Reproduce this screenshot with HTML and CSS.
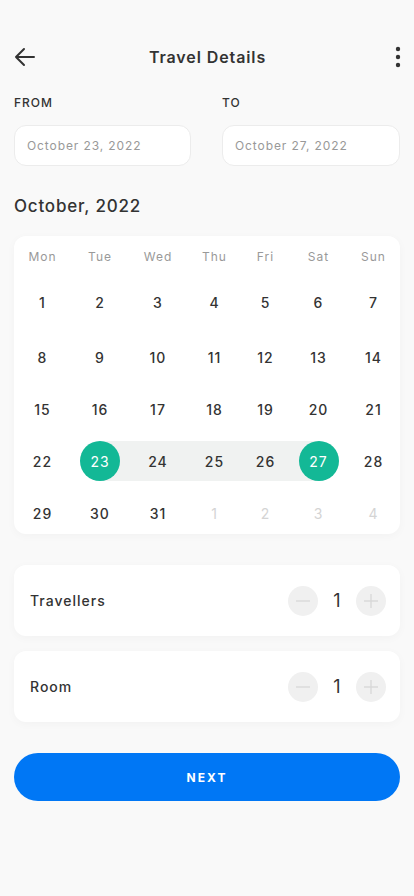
FILE: index.html
```html
<!DOCTYPE html>
<html lang="en">
<head>
    <meta charset="UTF-8">
    <meta name="viewport" content="width=device-width, initial-scale=1.0">
    <title>Travel Details</title>
    <link rel="stylesheet" href="styles.css">
</head>
<body>
    <div class="page">
        <header class="topbar">
            <button class="icon-btn" aria-label="Back">
                <svg width="22" height="22" viewBox="0 0 22 22" fill="none" stroke="#333" stroke-width="2" stroke-linecap="round" stroke-linejoin="round">
                    <path d="M20 11H2M10 3l-8 8 8 8"/>
                </svg>
            </button>
            <h1 class="title">Travel Details</h1>
            <button class="icon-btn more" aria-label="More">
                <svg width="6" height="22" viewBox="0 0 6 22" fill="#333">
                    <circle cx="3" cy="3" r="2.2"/>
                    <circle cx="3" cy="11" r="2.2"/>
                    <circle cx="3" cy="19" r="2.2"/>
                </svg>
            </button>
        </header>

        <div class="dates">
            <div class="date-field">
                <label>FROM</label>
                <div class="date-input">October 23, 2022</div>
            </div>
            <div class="date-field">
                <label>TO</label>
                <div class="date-input">October 27, 2022</div>
            </div>
        </div>

        <h2 class="month">October, 2022</h2>

        <div class="calendar">
            <div class="week weekdays">
                <span>Mon</span><span>Tue</span><span>Wed</span><span>Thu</span><span>Fri</span><span>Sat</span><span>Sun</span>
            </div>
            <div class="week">
                <span>1</span><span>2</span><span>3</span><span>4</span><span>5</span><span>6</span><span>7</span>
            </div>
            <div class="week">
                <span>8</span><span>9</span><span>10</span><span>11</span><span>12</span><span>13</span><span>14</span>
            </div>
            <div class="week">
                <span>15</span><span>16</span><span>17</span><span>18</span><span>19</span><span>20</span><span>21</span>
            </div>
            <div class="week in-range">
                <span>22</span><span class="picked">23</span><span>24</span><span>25</span><span>26</span><span class="picked">27</span><span>28</span>
            </div>
            <div class="week">
                <span>29</span><span>30</span><span>31</span><span class="muted">1</span><span class="muted">2</span><span class="muted">3</span><span class="muted">4</span>
            </div>
        </div>

        <div class="counter">
            <span class="counter-label">Travellers</span>
            <div class="stepper">
                <button class="step" aria-label="Less">
                    <svg width="14" height="14" viewBox="0 0 14 14" stroke="#d9d9d9" stroke-width="1.4"><path d="M0 7h14"/></svg>
                </button>
                <span class="count">1</span>
                <button class="step" aria-label="More">
                    <svg width="14" height="14" viewBox="0 0 14 14" stroke="#d9d9d9" stroke-width="1.4"><path d="M0 7h14M7 0v14"/></svg>
                </button>
            </div>
        </div>

        <div class="counter">
            <span class="counter-label">Room</span>
            <div class="stepper">
                <button class="step" aria-label="Less">
                    <svg width="14" height="14" viewBox="0 0 14 14" stroke="#d9d9d9" stroke-width="1.4"><path d="M0 7h14"/></svg>
                </button>
                <span class="count">1</span>
                <button class="step" aria-label="More">
                    <svg width="14" height="14" viewBox="0 0 14 14" stroke="#d9d9d9" stroke-width="1.4"><path d="M0 7h14M7 0v14"/></svg>
                </button>
            </div>
        </div>

        <button class="next">NEXT</button>
    </div>
</body>
</html>
```

FILE: styles.css
```css
body {
    margin: 0;
    background-color: #f9f9f9;
    font-family: Inter, "Noto Sans", sans-serif;
    color: #333;
}
button {
    font-family: inherit;
    border: none;
    background: none;
    padding: 0;
    cursor: pointer;
}
.page {
    padding: 0 14px;
}
.topbar {
    margin-top: 37px;
    height: 40px;
    display: flex;
    align-items: center;
    justify-content: space-between;
}
.icon-btn {
    width: 24px;
    height: 24px;
    display: flex;
    align-items: center;
}
.icon-btn.more {
    justify-content: flex-end;
    margin-right: -1px;
}
.title {
    margin: 0;
    font-size: 16px;
    font-weight: 600;
    letter-spacing: 0.9px;
    color: #333;
}
.dates {
    margin-top: 18px;
    display: grid;
    grid-template-columns: 177px 178px;
    justify-content: space-between;
}
.date-field label {
    display: block;
    font-size: 12px;
    font-weight: 500;
    letter-spacing: 1px;
    line-height: 16px;
    color: #333;
}
.date-input {
    margin-top: 14px;
    height: 41px;
    box-sizing: border-box;
    padding: 0 12px;
    display: flex;
    align-items: center;
    background-color: white;
    border: 1px solid #ececec;
    border-radius: 12px;
    font-size: 12px;
    letter-spacing: 0.9px;
    color: #999;
}
.month {
    margin: 29px 0 0;
    font-size: 17px;
    font-weight: 500;
    line-height: 22px;
    letter-spacing: 0.8px;
    color: #333;
}
.calendar {
    margin-top: 19px;
    background-color: white;
    border-radius: 12px;
    padding: 10px 0 1px;
    box-shadow: 0 2px 10px rgba(0, 0, 0, 0.03);
    display: flex;
    flex-direction: column;
    gap: 12px;
}
.week {
    display: grid;
    grid-template-columns: 57px 58px 58px 55px 47px 59px 51px;
    height: 40px;
    align-items: center;
    justify-items: center;
    font-size: 14px;
    font-weight: 500;
    letter-spacing: 1px;
}
.week span {
    display: flex;
    justify-content: center;
    width: 40px;
}
.weekdays {
    height: 20px;
    margin-bottom: 4px;
    font-size: 12px;
    font-weight: 400;
    color: #999;
}
.calendar .week:nth-child(2) {
    margin-bottom: 3px;
}
.in-range {
    background: linear-gradient(#f0f2f1, #f0f2f1) no-repeat 85px 0 / 219px 40px;
}
.week .picked {
    height: 40px;
    align-items: center;
    border-radius: 50%;
    background-color: #13b896;
    color: white;
    font-weight: 400;
}
.muted {
    color: #d4d4d4;
    font-weight: 400;
}
.counter {
    margin-top: 15px;
    height: 71px;
    box-sizing: border-box;
    padding: 0 14px 0 16px;
    background-color: white;
    border-radius: 12px;
    box-shadow: 0 2px 10px rgba(0, 0, 0, 0.03);
    display: flex;
    align-items: center;
    justify-content: space-between;
}
.calendar + .counter {
    margin-top: 31px;
}
.counter-label {
    font-size: 14px;
    font-weight: 500;
    letter-spacing: 1px;
    color: #333;
}
.stepper {
    display: flex;
    align-items: center;
}
.step {
    width: 30px;
    height: 30px;
    border-radius: 50%;
    background-color: #f0f0f0;
    display: flex;
    align-items: center;
    justify-content: center;
}
.count {
    width: 38px;
    text-align: center;
    font-size: 18px;
    color: #333;
}
.next {
    margin-top: 31px;
    width: 100%;
    height: 48px;
    border-radius: 24px;
    background-color: #0077f5;
    color: white;
    font-size: 12px;
    font-weight: 700;
    letter-spacing: 2px;
}
```
